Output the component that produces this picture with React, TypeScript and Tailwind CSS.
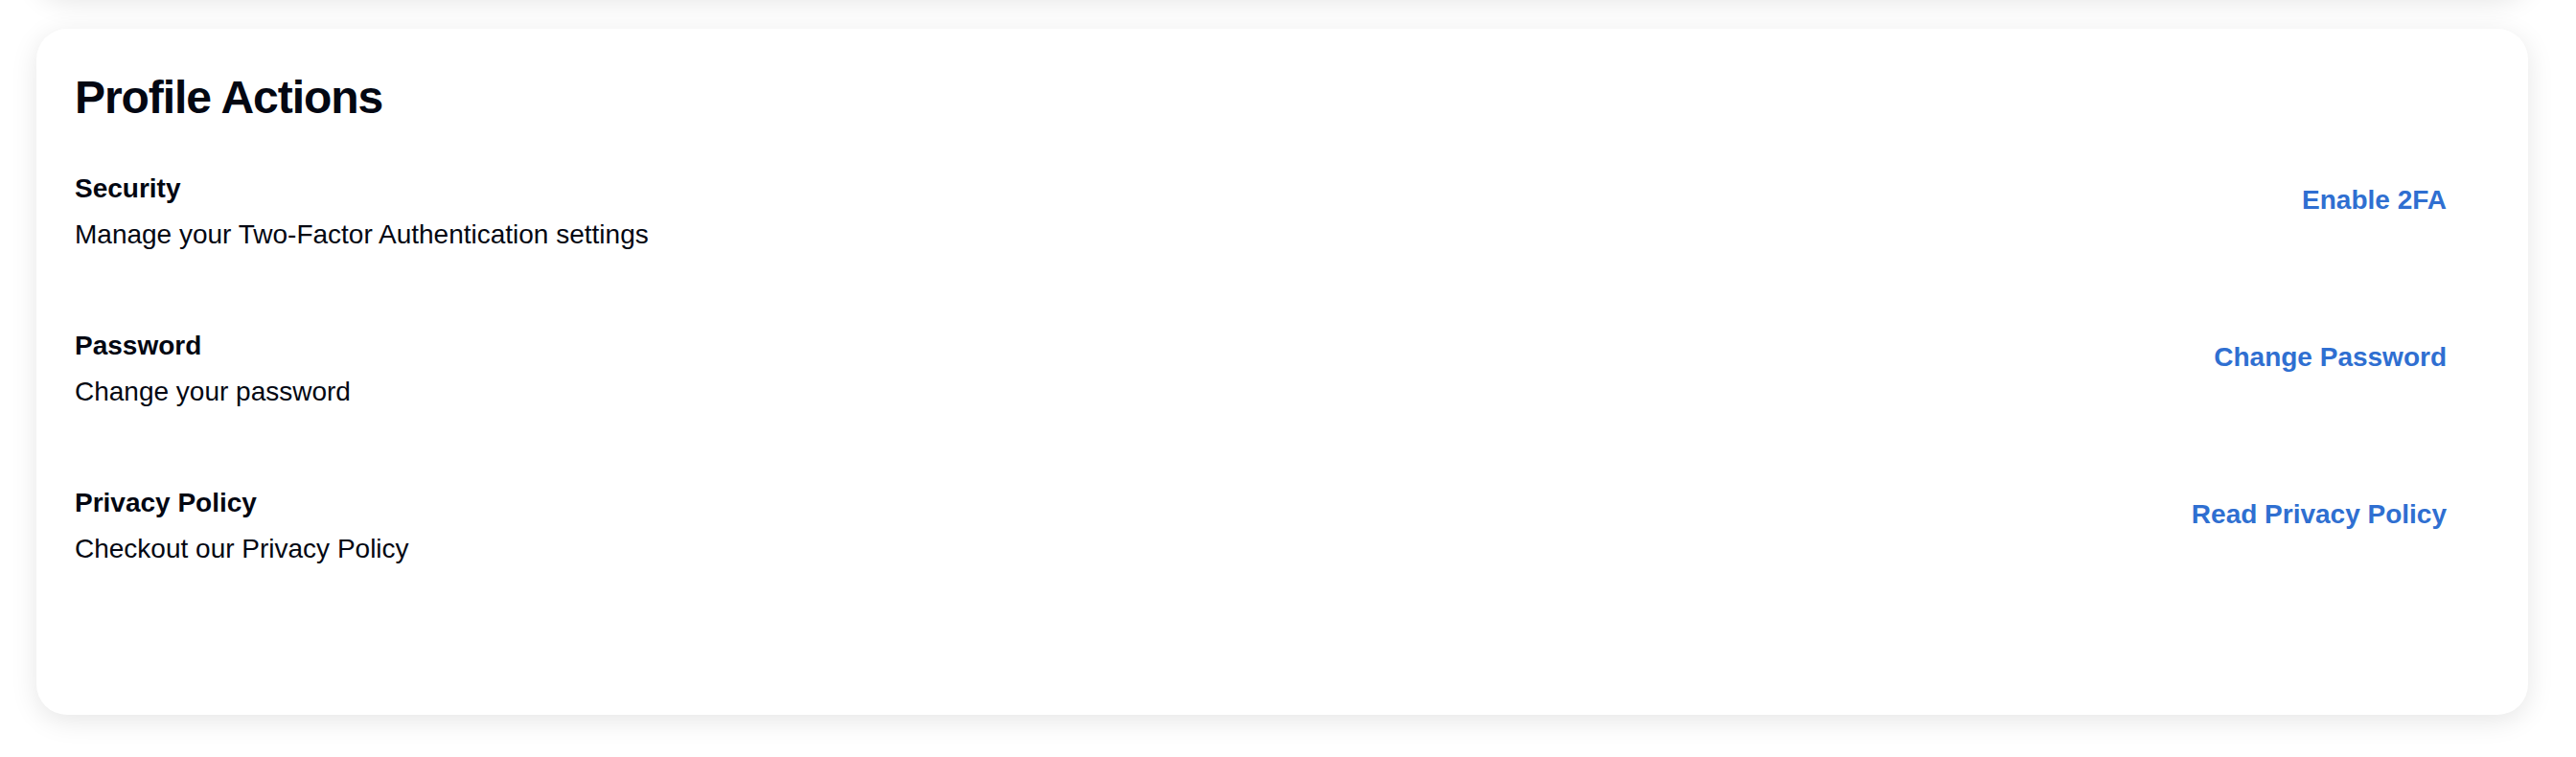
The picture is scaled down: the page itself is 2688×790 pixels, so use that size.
const actions = [
  {
    title: "Security",
    description: "Manage your Two-Factor Authentication settings",
    action: "Enable 2FA",
  },
  {
    title: "Password",
    description: "Change your password",
    action: "Change Password",
  },
  {
    title: "Privacy Policy",
    description: "Checkout our Privacy Policy",
    action: "Read Privacy Policy",
  },
];

function ActionRow({ title, description, action }: (typeof actions)[number]) {
  return (
    <div className="flex items-start justify-between">
      <div className="flex flex-col gap-[8px]">
        <h3 className="text-[28px] leading-[40px] font-bold text-gray-950">
          {title}
        </h3>
        <p className="text-[28px] leading-[40px] text-gray-950">{description}</p>
      </div>
      <button className="px-[45px] py-[12px] text-[28px] leading-[40px] font-bold text-[#2f6fd1]">
        {action}
      </button>
    </div>
  );
}

export default function App() {
  return (
    <div
      className="h-[790px] overflow-hidden bg-white"
      style={{ fontFamily: '"Liberation Sans", Arial, sans-serif' }}
    >
      <div className="-mt-[204px] ml-[38px] mr-[50px] flex flex-col gap-[34px]">
        {/* bottom of the card above, mostly out of view */}
        <div className="h-[200px] rounded-[32px] bg-white shadow-[0_6px_28px_rgba(0,0,0,0.1)]" />

        <div className="rounded-[32px] bg-white px-[40px] pt-[40px] pb-[153px] shadow-[0_6px_28px_rgba(0,0,0,0.1)]">
          <h2 className="text-[48px] leading-[64px] font-bold tracking-[-0.022em] text-gray-950">
            Profile Actions
          </h2>
          <div className="mt-[43px] flex flex-col gap-[76px]">
            {actions.map((a) => (
              <ActionRow key={a.title} {...a} />
            ))}
          </div>
        </div>
      </div>
    </div>
  );
}
